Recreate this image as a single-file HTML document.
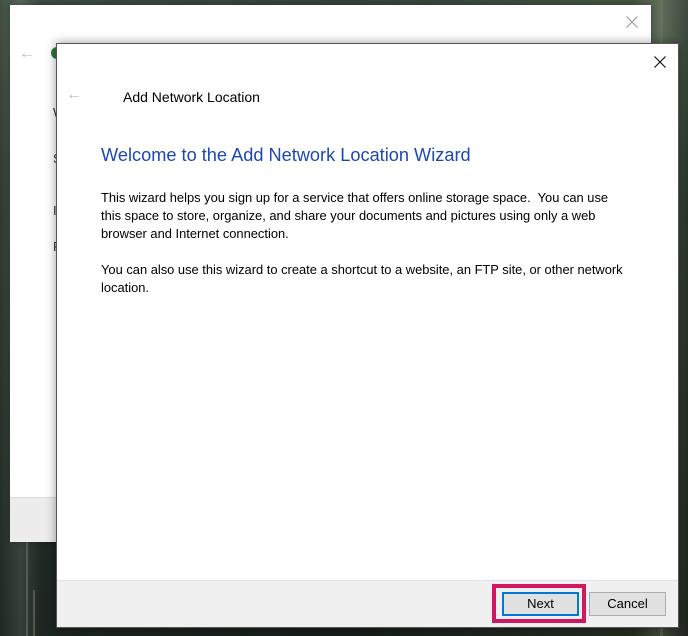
<!DOCTYPE html>
<html><head><meta charset="utf-8"><style>
*{margin:0;padding:0;box-sizing:border-box}
body{width:688px;height:636px;overflow:hidden;position:relative;font-family:"Liberation Sans",sans-serif;
background:linear-gradient(90deg,#2e3a33 0%,#4a5a4e 3%,#2a352e 6%,#1f2924 50%,#33402f 92%,#596452 96%,#2b342c 100%);}
.bgtex{position:absolute;inset:0;background:
linear-gradient(180deg,rgba(120,140,120,.25),rgba(0,0,0,0) 30%,rgba(0,0,0,.3) 100%);}
.trunk{position:absolute;background:#7a8070;opacity:.5}
.back{position:absolute;left:10px;top:5px;width:641px;height:537px;background:#fff;box-shadow:0 0 6px rgba(0,0,0,.3)}
.back .foot{position:absolute;left:0;bottom:0;width:100%;height:45px;background:#ececec;border-top:1px solid #ddd}
.front{position:absolute;left:56px;top:43px;width:623px;height:585px;background:#fff;border:1px solid #555;box-shadow:0 0 10px rgba(0,0,0,.4)}
.front .foot{position:absolute;left:0;bottom:0;width:100%;height:47px;background:#f0f0f0;border-top:1px solid #e2e2e2}
.x{position:absolute}
.title{position:absolute;left:66px;top:45px;font-size:14px;color:#000}
h1{position:absolute;left:44px;top:101px;font-size:18.2px;font-weight:normal;color:#1e47b4;white-space:nowrap}
p{position:absolute;left:44px;white-space:nowrap;font-size:12.9px;line-height:18px;color:#000}
.btn{position:absolute;height:24px;font-size:13px;text-align:center;line-height:22px;background:#e1e1e1;border:1px solid #adadad}
</style></head><body>
<div class="bgtex"></div>
<div class="trunk" style="left:26px;top:540px;width:2px;height:96px"></div>
<div class="trunk" style="left:33px;top:590px;width:2px;height:46px"></div>
<div class="trunk" style="left:660px;top:0;width:3px;height:636px;opacity:.3"></div>
<div class="back">
 <div style="position:absolute;left:9px;top:40px;color:#bbb;font-size:16px">&#8592;</div>
 <div style="position:absolute;left:41px;top:42px;width:8px;height:12px;background:#2a7a3a;border-radius:6px 0 0 6px"></div>
 <svg class="x" style="left:616px;top:11px" width="12" height="12"><path d="M0.5 0.5L11.5 11.5M11.5 0.5L0.5 11.5" stroke="#999" stroke-width="1.1"/></svg>
 <div style="position:absolute;left:43px;top:100px;font-size:13px;color:#333">W</div>
 <div style="position:absolute;left:43px;top:146px;font-size:13px;color:#333">S</div>
 <div style="position:absolute;left:43px;top:198px;font-size:13px;color:#333">I</div>
 <div style="position:absolute;left:43px;top:234px;font-size:13px;color:#333">F</div>
 <div class="foot"></div>
</div>
<div class="front">
 <div style="position:absolute;left:9px;top:42px;color:#bbb;font-size:16px">&#8592;</div>
 <div class="title">Add Network Location</div>
 <svg class="x" style="left:597px;top:12px" width="12" height="12"><path d="M0.5 0.5L11.5 11.5M11.5 0.5L0.5 11.5" stroke="#111" stroke-width="1.2"/></svg>
 <h1>Welcome to the Add Network Location Wizard</h1>
 <p style="top:145px">This wizard helps you sign up for a service that offers online storage space.&nbsp; You can use<br>this space to store, organize, and share your documents and pictures using only a web<br>browser and Internet connection.</p>
 <p style="top:217px">You can also use this wizard to create a shortcut to a website, an FTP site, or other network<br>location.</p>
 <div class="foot"></div>
 <div style="position:absolute;left:435px;top:540px;width:94px;height:39px;border:4px solid #d1175f"></div>
 <div class="btn" style="left:445px;top:548px;width:77px;border:2px solid #0078d7;line-height:20px">Next</div>
 <div class="btn" style="left:532px;top:548px;width:77px">Cancel</div>
</div>
</body></html>
